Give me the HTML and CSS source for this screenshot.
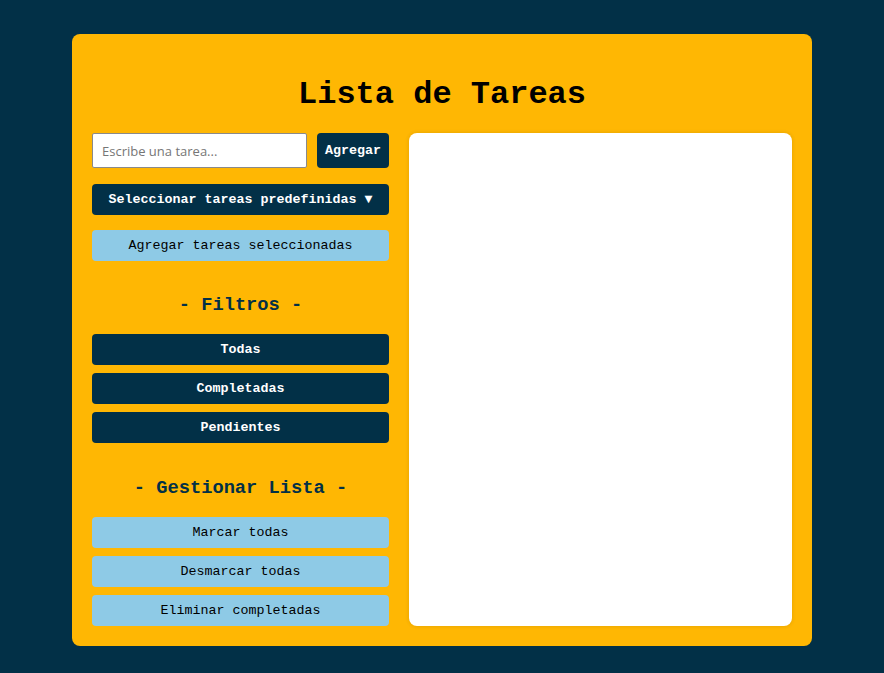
FILE: index.html
```html
<!DOCTYPE html>
<html lang="es">
<head>
<meta charset="utf-8">
<title>Lista de Tareas</title>
<link rel="stylesheet" href="styles.css">
</head>
<body>
<div class="card">
  <h1 class="title">Lista de Tareas</h1>
  <div class="layout">
    <div class="sidebar">
      <div class="add-row">
        <input class="task-input" type="text" placeholder="Escribe una tarea...">
        <button class="btn btn-dark btn-add">Agregar</button>
      </div>
      <button class="btn btn-dark btn-select">Seleccionar tareas predefinidas ▼</button>
      <button class="btn btn-light btn-addsel">Agregar tareas seleccionadas</button>

      <h3 class="section-title first">- Filtros -</h3>
      <div class="btn-stack">
        <button class="btn btn-dark">Todas</button>
        <button class="btn btn-dark">Completadas</button>
        <button class="btn btn-dark">Pendientes</button>
      </div>

      <h3 class="section-title">- Gestionar Lista -</h3>
      <div class="btn-stack">
        <button class="btn btn-light">Marcar todas</button>
        <button class="btn btn-light">Desmarcar todas</button>
        <button class="btn btn-light">Eliminar completadas</button>
      </div>
    </div>
    <div class="task-panel"></div>
  </div>
</div>
</body>
</html>
```
FILE: styles.css
```css
html, body {
  margin: 0;
  padding: 0;
}
body {
  background: #023047;
  font-family: "Liberation Mono", "Courier New", monospace;
  min-height: 673px;
}
.card {
  width: 700px;
  margin: 34px 0 0 72px;
  background: #FFB703;
  border-radius: 8px;
  padding: 20px;
}
.title {
  margin: 0;
  padding: 23px 0 20px;
  font-size: 32px;
  line-height: 36px;
  font-weight: bold;
  text-align: center;
  color: #000;
}
.layout {
  display: flex;
  gap: 20px;
  align-items: stretch;
}
.sidebar {
  width: 297px;
  display: flex;
  flex-direction: column;
}
.add-row {
  display: flex;
  gap: 10px;
  margin-bottom: 16px;
}
.task-input {
  width: 215px;
  height: 35px;
  box-sizing: border-box;
  border: 1px solid #8a8a8a;
  border-radius: 2px;
  padding: 0 9px;
  font-family: "Open Sans", "Noto Sans", sans-serif;
  font-size: 13px;
  background: #fff;
  outline: none;
}
.task-input::placeholder {
  color: #767676;
}
.btn {
  border: none;
  border-radius: 4px;
  font-family: "Liberation Mono", "Courier New", monospace;
  font-size: 13.333px;
  height: 31px;
  width: 100%;
  padding: 0;
  cursor: pointer;
}
.btn-dark {
  background: #023047;
  color: #fff;
  font-weight: bold;
}
.btn-light {
  background: #8ECAE6;
  color: #000;
  font-weight: normal;
}
.btn-add {
  width: 72px;
  height: 35px;
  flex: none;
}
.btn-select {
  margin-bottom: 15px;
}
.section-title {
  margin: 33px 0 18px;
  font-size: 18.72px;
  line-height: 22px;
  font-weight: bold;
  text-align: center;
  color: #023047;
}
.btn-stack {
  display: flex;
  flex-direction: column;
  gap: 8px;
}
.btn-stack + .section-title {
  margin-top: 34px;
  margin-bottom: 18px;
}
.task-panel {
  flex: 1;
  background: #fff;
  border-radius: 8px;
  box-shadow: 0 0 4px rgba(0, 0, 0, 0.12);
}
```
